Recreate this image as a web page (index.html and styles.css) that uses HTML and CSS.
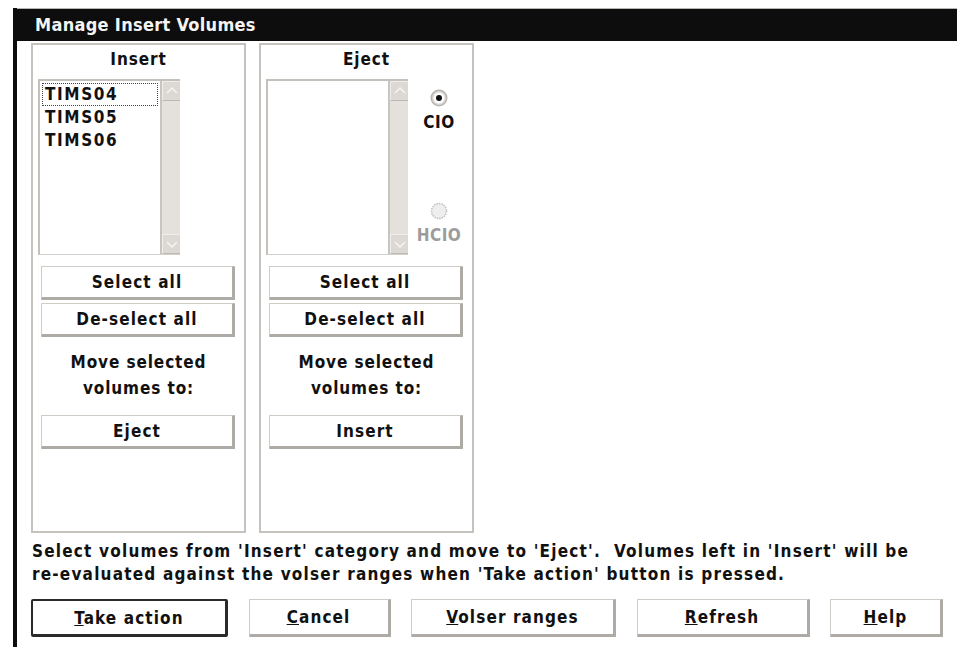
FILE: index.html
```
<!DOCTYPE html>
<html lang="en">
<head>
    <meta charset="UTF-8">
    <title>Manage Insert Volumes</title>
    <link rel="stylesheet" href="styles.css">
</head>
<body>
    <div class="window">
        <div class="titlebar">Manage Insert Volumes</div>
        <div class="client">
            <div class="groups">
                <div class="group">
                    <div class="group-title">Insert</div>
                    <div class="list-row">
                        <div class="listbox">
                            <ul class="items">
                                <li class="focused">TIMS04</li>
                                <li>TIMS05</li>
                                <li>TIMS06</li>
                            </ul>
                            <div class="scrollbar">
                                <div class="arrow"><svg width="14" height="10" viewBox="0 0 14 10"><polyline points="2,7 7,2 12,7" fill="none" stroke="#f6f4f2" stroke-width="1.5"/></svg></div>
                                <div class="track"></div>
                                <div class="arrow"><svg width="14" height="10" viewBox="0 0 14 10"><polyline points="2,3 7,8 12,3" fill="none" stroke="#f6f4f2" stroke-width="1.5"/></svg></div>
                            </div>
                        </div>
                    </div>
                    <button class="btn first">Select all</button>
                    <button class="btn">De-select all</button>
                    <div class="move-text">Move selected<br>volumes to:</div>
                    <button class="btn">Eject</button>
                </div>

                <div class="group">
                    <div class="group-title">Eject</div>
                    <div class="list-row">
                        <div class="listbox">
                            <ul class="items"></ul>
                            <div class="scrollbar">
                                <div class="arrow"><svg width="14" height="10" viewBox="0 0 14 10"><polyline points="2,7 7,2 12,7" fill="none" stroke="#f6f4f2" stroke-width="1.5"/></svg></div>
                                <div class="track"></div>
                                <div class="arrow"><svg width="14" height="10" viewBox="0 0 14 10"><polyline points="2,3 7,8 12,3" fill="none" stroke="#f6f4f2" stroke-width="1.5"/></svg></div>
                            </div>
                        </div>
                        <div class="radios">
                            <div class="radio">
                                <svg width="18" height="18" viewBox="0 0 18 18">
                                    <circle cx="9" cy="9" r="8.5" fill="#b8b4b0"/>
                                    <circle cx="9" cy="9" r="7" fill="#dcd8d4"/>
                                    <circle cx="9" cy="9" r="5.5" fill="#ffffff"/>
                                    <circle cx="9" cy="9" r="3" fill="#111111"/>
                                </svg>
                                <span>CIO</span>
                            </div>
                            <div class="radio disabled">
                                <svg width="18" height="18" viewBox="0 0 18 18">
                                    <circle cx="9" cy="9" r="7.5" fill="#eeeeee" stroke="#bdbdbd" stroke-width="1.5" stroke-dasharray="1.5 1"/>
                                </svg>
                                <span>HCIO</span>
                            </div>
                        </div>
                    </div>
                    <button class="btn first">Select all</button>
                    <button class="btn">De-select all</button>
                    <div class="move-text">Move selected<br>volumes to:</div>
                    <button class="btn">Insert</button>
                </div>
            </div>

            <p class="hint">Select volumes from 'Insert' category and move to 'Eject'.&nbsp; Volumes left in 'Insert' will be<br>re-evaluated against the volser ranges when 'Take action' button is pressed.</p>

            <div class="actions">
                <button class="btn wide default"><u>T</u>ake action</button>
                <button class="btn wide cancel"><u>C</u>ancel</button>
                <button class="btn wide volser"><u>V</u>olser ranges</button>
                <button class="btn wide refresh"><u>R</u>efresh</button>
                <button class="btn wide help"><u>H</u>elp</button>
            </div>
        </div>
    </div>
</body>
</html>
```

FILE: styles.css
```
body {
    margin: 0;
    background-color: #fff;
    font-family: "DejaVu Sans Condensed", "DejaVu Sans", sans-serif;
    font-weight: bold;
    font-size: 17px;
    color: #111;
}

.window {
    margin: 8px 0 0 13px;
    height: calc(100vh - 8px);
    border-left: 4px solid #0c0d0c;
    box-sizing: border-box;
}

.titlebar {
    height: 32px;
    line-height: 32px;
    padding-left: 18px;
    background-color: #0c0d0c;
    border-top: 1px solid #b8b4b0;
    color: #f4f4f4;
    font-size: 18px;
    letter-spacing: 0.3px;
}

.client {
    padding: 2px 0 0 14px;
}

.groups {
    display: flex;
    gap: 13px;
    height: 490px;
}

.group {
    width: 215px;
    box-sizing: border-box;
    border: 2px solid #c6c2be;
    display: flex;
    flex-direction: column;
    align-items: flex-start;
    letter-spacing: 0.9px;
}

.group-title {
    align-self: center;
    height: 28px;
    line-height: 28px;
    margin-bottom: 6px;
}

.list-row {
    display: flex;
    margin-left: 5px;
}

.listbox {
    display: flex;
    width: 142px;
    height: 176px;
    box-sizing: border-box;
    border-top: 2px solid #c4c0bc;
    border-left: 2px solid #c4c0bc;
    border-bottom: 1px solid #d4d0cc;
    background-color: #fff;
}

.items {
    flex: 1;
    list-style: none;
    margin: 0;
    padding: 2px 0 0 2px;
    letter-spacing: 1.6px;
}

.items li {
    height: 23px;
    line-height: 23px;
    padding-left: 3px;
    width: 116px;
    box-sizing: border-box;
}

.items li.focused {
    outline: 1px dotted #444;
    outline-offset: -1px;
}

.scrollbar {
    width: 18px;
    display: flex;
    flex-direction: column;
    background-color: #e4e0dc;
    border-left: 2px solid #c8c4c0;
}

.arrow {
    height: 18px;
    display: flex;
    align-items: center;
    justify-content: center;
    background-color: #dcd8d4;
    border-top: 1px solid #f0eeec;
    border-left: 1px solid #f0eeec;
    border-bottom: 1px solid #bcb8b4;
}

.track {
    flex: 1;
}

.radios {
    width: 62px;
    display: flex;
    flex-direction: column;
    align-items: center;
    padding-top: 10px;
    gap: 70px;
    letter-spacing: 0.5px;
}

.radio {
    display: flex;
    flex-direction: column;
    align-items: center;
    gap: 5px;
}

.radio.disabled {
    color: #9c9c9c;
}

.btn {
    display: block;
    width: 194px;
    height: 34px;
    margin: 3px 0 0 8px;
    padding: 0;
    background-color: #fff;
    border-top: 1px solid #cfcbc7;
    border-left: 1px solid #cfcbc7;
    border-right: 3px solid #aeaaa6;
    border-bottom: 3px solid #aeaaa6;
    border-radius: 1px;
    font: inherit;
    color: #111;
    letter-spacing: 1.1px;
}

.btn.first {
    margin-top: 11px;
}

.move-text {
    align-self: stretch;
    text-align: center;
    line-height: 26px;
    margin: 12px 0 11px;
}

.hint {
    margin: 7px 0 0 1px;
    line-height: 23px;
    font-size: 17px;
    letter-spacing: 1.2px;
}

.actions {
    display: flex;
    justify-content: space-between;
    width: 912px;
    margin-top: 13px;
}

.btn.wide {
    margin: 0;
    height: 38px;
}

.btn.default {
    width: 197px;
    border: 2px solid #2a2a2a;
    border-right-width: 3px;
    border-bottom-width: 3px;
    border-radius: 2px;
}

.btn.cancel {
    width: 142px;
}

.btn.volser {
    width: 205px;
}

.btn.refresh {
    width: 173px;
}

.btn.help {
    width: 113px;
}
```
